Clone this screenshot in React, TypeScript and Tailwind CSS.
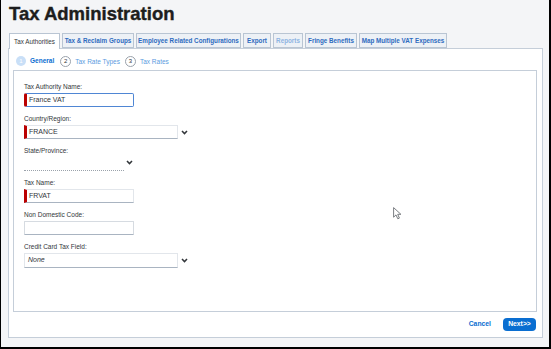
import React from 'react';

const tabs = [
  { label: 'Tax Authorities', w: 'w-[51px]', active: true },
  { label: 'Tax & Reclaim Groups', w: 'w-[72px]' },
  { label: 'Employee Related Configurations', w: 'w-[105px]' },
  { label: 'Export', w: 'w-[28px]' },
  { label: 'Reports', w: 'w-[30px]', disabled: true },
  { label: 'Fringe Benefits', w: 'w-[52px]' },
  { label: 'Map Multiple VAT Expenses', w: 'w-[88px]' },
];

const Chevron = () => (
  <svg width="7" height="5" viewBox="0 0 7 5" className="shrink-0">
    <path d="M1 1 L3.5 3.6 L6 1" fill="none" stroke="#32363a" strokeWidth="1.5" />
  </svg>
);

const Label = ({ children }: { children: React.ReactNode }) => (
  <div className="h-[8px] text-[6.5px] leading-[8px] text-[#32363a]">{children}</div>
);

const App = () => {
  return (
    <div className="relative h-[349px] w-[551px] overflow-hidden border-l border-r-2 border-b-2 border-black bg-[#f4f5f7] font-['Liberation_Sans',Arial,sans-serif]">
      {/* Title */}
      <div className="pl-[8px] pt-[5px] text-[18.5px] font-bold leading-[18px] text-[#1d1d1d] [-webkit-text-stroke:0.4px_#1d1d1d]">
        Tax Administration
      </div>

      {/* Tabs */}
      <div className="mt-[10px] ml-[8px] flex items-end gap-[2px]">
        {tabs.map((t) => (
          <div
            key={t.label}
            className={
              t.active
                ? `${t.w} relative z-10 -mb-px flex h-[16px] items-center justify-center border border-b-0 border-[#b9c5d3] bg-white text-[6.3px] text-[#32363a]`
                : `${t.w} flex h-[15px] items-center justify-center border border-[#b9c5d3] bg-[#edf1f6] text-[6.3px] font-semibold ${t.disabled ? 'font-normal text-[#8db4e2]' : 'text-[#2d6bbf]'}`
            }
          >
            <span className="whitespace-nowrap">{t.label}</span>
          </div>
        ))}
      </div>

      {/* Main panel */}
      <div className="ml-[7px] mr-[6px] flex h-[290px] flex-col border border-[#c5ced9] bg-white">
        {/* Steps */}
        <div className="flex h-[21px] items-start gap-[5px] pl-[7px] pt-[7px] text-[6.5px]">
          <div className="flex items-center gap-[4px]">
            <span className="flex h-[10px] w-[10px] items-center justify-center rounded-full bg-[#c9dff7] text-[6px] text-white">1</span>
            <span className="font-semibold text-[#0a6ed1]">General</span>
          </div>
          <div className="ml-[1px] flex items-center gap-[4px]">
            <span className="flex h-[11px] w-[11px] items-center justify-center rounded-full border border-[#9aa2ab] text-[6px] text-[#32363a]">2</span>
            <span className="text-[#5b9be0]">Tax Rate Types</span>
          </div>
          <div className="flex items-center gap-[4px]">
            <span className="flex h-[11px] w-[11px] items-center justify-center rounded-full border border-[#9aa2ab] text-[6px] text-[#32363a]">3</span>
            <span className="text-[#5b9be0]">Tax Rates</span>
          </div>
        </div>

        {/* Form */}
        <div className="ml-[4px] mr-[5px] h-[242px] border border-[#c5ced9] bg-white pl-[10px] pt-[12px]">
          <Label>Tax Authority Name:</Label>
          <div className="mt-[2px] mb-[8px] flex h-[14px] w-[110px] items-center rounded-[2px] border border-[#4f86d4] border-l-[3px] border-l-[#bb0000] pl-[2px] text-[7px] text-[#32363a]">
            France VAT
          </div>

          <Label>Country/Region:</Label>
          <div className="mt-[2px] mb-[8px] flex items-center gap-[3px]">
            <div className="flex h-[14px] w-[154px] items-center border border-[#e2e6eb] border-b-[#a9b4c1] border-l-[3px] border-l-[#bb0000] pl-[2px] text-[7px] text-[#32363a]">
              FRANCE
            </div>
            <Chevron />
          </div>

          <Label>State/Province:</Label>
          <div className="mt-[2px] mb-[8px] flex h-[14px] items-end gap-[2px]">
            <div className="h-[14px] w-[100px] border-b border-dotted border-[#9aa2ab]" />
            <div className="mb-[6px]">
              <Chevron />
            </div>
          </div>

          <Label>Tax Name:</Label>
          <div className="mt-[2px] mb-[8px] flex h-[14px] w-[110px] items-center border border-[#e2e6eb] border-b-[#a9b4c1] border-l-[3px] border-l-[#bb0000] pl-[2px] text-[7px] text-[#32363a]">
            FRVAT
          </div>

          <Label>Non Domestic Code:</Label>
          <div className="mt-[2px] mb-[8px] h-[14px] w-[110px] rounded-[1px] border border-[#d6dbe1] border-b-[#a9b4c1]" />

          <Label>Credit Card Tax Field:</Label>
          <div className="mt-[2px] flex items-center gap-[3px]">
            <div className="flex h-[15px] w-[154px] items-center border border-[#e2e6eb] border-b-[#a9b4c1] pl-[3px] text-[7px] italic text-[#32363a]">
              None
            </div>
            <Chevron />
          </div>
        </div>

        {/* Footer */}
        <div className="flex flex-1 items-center justify-end gap-[12px] pr-[6px]">
          <span className="text-[6.8px] font-semibold text-[#0a6ed1]">Cancel</span>
          <button className="flex h-[13px] w-[33px] items-center justify-center rounded-[4px] bg-[#0a6ed1] text-[6.8px] font-semibold text-white">
            Next&gt;&gt;
          </button>
        </div>
      </div>

      {/* Mouse pointer */}
      <svg className="absolute left-[392px] top-[207px]" width="9" height="13" viewBox="0 0 9 13">
        <path d="M0.6 0.6 L0.6 10.2 L3 7.9 L4.8 11.8 L6.4 11.1 L4.7 7.3 L7.9 7.3 Z" fill="#fff" stroke="#6b6f74" strokeWidth="0.9" strokeLinejoin="round" />
      </svg>
    </div>
  );
};

export default App;
